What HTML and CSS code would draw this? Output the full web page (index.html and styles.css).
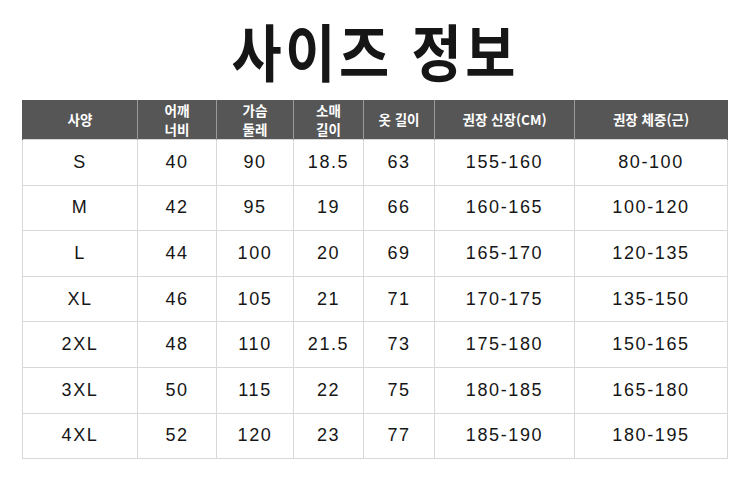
FILE: index.html
```html
<!DOCTYPE html>
<html lang="ko">
<head>
<meta charset="utf-8">
<link rel="stylesheet" href="styles.css">
</head>
<body>
<div class="page">
  <h1 class="title"><span class="title-text">사이즈 정보</span></h1>
  <table class="size-table">
    <colgroup>
      <col class="c1"><col class="c2"><col class="c3"><col class="c4"><col class="c5"><col class="c6"><col class="c7">
    </colgroup>
    <thead>
      <tr>
        <th>사양</th>
        <th>어깨<br>너비</th>
        <th>가슴<br>둘레</th>
        <th>소매<br>길이</th>
        <th>옷 길이</th>
        <th>권장 신장(CM)</th>
        <th>권장 체중(근)</th>
      </tr>
    </thead>
    <tbody>
      <tr><td>S</td><td>40</td><td>90</td><td>18.5</td><td>63</td><td>155-160</td><td>80-100</td></tr>
      <tr><td>M</td><td>42</td><td>95</td><td>19</td><td>66</td><td>160-165</td><td>100-120</td></tr>
      <tr><td>L</td><td>44</td><td>100</td><td>20</td><td>69</td><td>165-170</td><td>120-135</td></tr>
      <tr><td>XL</td><td>46</td><td>105</td><td>21</td><td>71</td><td>170-175</td><td>135-150</td></tr>
      <tr><td>2XL</td><td>48</td><td>110</td><td>21.5</td><td>73</td><td>175-180</td><td>150-165</td></tr>
      <tr><td>3XL</td><td>50</td><td>115</td><td>22</td><td>75</td><td>180-185</td><td>165-180</td></tr>
      <tr><td>4XL</td><td>52</td><td>120</td><td>23</td><td>77</td><td>185-190</td><td>180-195</td></tr>
    </tbody>
  </table>
</div>
</body>
</html>
```

FILE: styles.css
```css
html, body {
  margin: 0;
  padding: 0;
  background: #ffffff;
}
.page {
  width: 750px;
  height: 499px;
  padding-top: 12px;
  box-sizing: border-box;
}
.title {
  margin: 0;
  height: 88px;
  text-align: center;
  font-family: "Noto Sans CJK KR", sans-serif;
  font-weight: 700;
  font-size: 62px;
  line-height: 76px;
  color: #161616;
}
.title-text {
  display: inline-block;
  letter-spacing: 4px;
  transform: scaleX(0.88);
}
.size-table {
  margin-left: 22px;
  border-collapse: collapse;
  table-layout: fixed;
  width: 705px;
  font-family: "Liberation Sans", "Noto Sans CJK KR", sans-serif;
}
.c1 { width: 115px; }
.c2 { width: 79px; }
.c3 { width: 77px; }
.c4 { width: 70px; }
.c5 { width: 71px; }
.c6 { width: 140px; }
.c7 { width: 153px; }
.size-table th {
  background: #565656;
  color: #ffffff;
  height: 39px;
  padding: 0;
  font-family: "Noto Sans CJK KR", sans-serif;
  font-weight: 700;
  font-size: 13.5px;
  line-height: 19px;
  border-left: 1px solid #9a9a9a;
  border-right: 1px solid #9a9a9a;
  text-align: center;
  vertical-align: middle;
}
.size-table th:first-child { border-left: 1px solid #565656; }
.size-table th:last-child { border-right: 1px solid #565656; }
.size-table td {
  height: 44.6px;
  padding: 0;
  border: 1px solid #d8d8d8;
  text-align: center;
  vertical-align: middle;
  font-size: 18px;
  color: #161616;
  letter-spacing: 1.6px;
}
```
